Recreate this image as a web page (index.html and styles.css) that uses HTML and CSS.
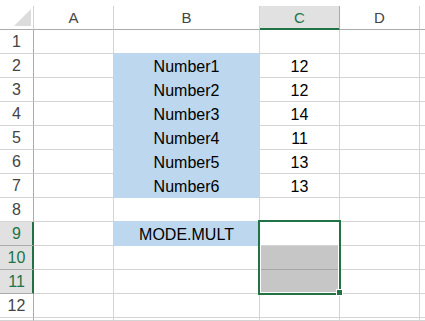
FILE: index.html
```html
<!DOCTYPE html>
<html lang="en">

<head>
  <meta charset="UTF-8" />
  <title>MODE.MULT</title>
  <link rel="stylesheet" href="styles.css">
</head>

<body>
  <div class="sheet">
    <div class="corner"><span class="tri"></span></div>
    <div class="colhead">A</div>
    <div class="colhead">B</div>
    <div class="colhead sel">C</div>
    <div class="colhead">D</div>
    <div class="colhead last"></div>

    <div class="rowhead">1</div><div class="cell"></div><div class="cell"></div><div class="cell"></div><div class="cell"></div><div class="cell last"></div>
    <div class="rowhead">2</div><div class="cell"></div><div class="cell fill">Number1</div><div class="cell">12</div><div class="cell"></div><div class="cell last"></div>
    <div class="rowhead">3</div><div class="cell"></div><div class="cell fill">Number2</div><div class="cell">12</div><div class="cell"></div><div class="cell last"></div>
    <div class="rowhead">4</div><div class="cell"></div><div class="cell fill">Number3</div><div class="cell">14</div><div class="cell"></div><div class="cell last"></div>
    <div class="rowhead">5</div><div class="cell"></div><div class="cell fill">Number4</div><div class="cell">11</div><div class="cell"></div><div class="cell last"></div>
    <div class="rowhead">6</div><div class="cell"></div><div class="cell fill">Number5</div><div class="cell">13</div><div class="cell"></div><div class="cell last"></div>
    <div class="rowhead">7</div><div class="cell"></div><div class="cell fill">Number6</div><div class="cell">13</div><div class="cell"></div><div class="cell last"></div>
    <div class="rowhead">8</div><div class="cell"></div><div class="cell"></div><div class="cell"></div><div class="cell"></div><div class="cell last"></div>
    <div class="rowhead sel">9</div><div class="cell"></div><div class="cell fill">MODE.MULT</div>
    <div class="cell active"><div class="selection"><span class="handle"></span></div></div>
    <div class="cell"></div><div class="cell last"></div>
    <div class="rowhead sel">10</div><div class="cell"></div><div class="cell"></div><div class="cell shade"></div><div class="cell"></div><div class="cell last"></div>
    <div class="rowhead sel">11</div><div class="cell"></div><div class="cell"></div><div class="cell shade"></div><div class="cell"></div><div class="cell last"></div>
    <div class="rowhead">12</div><div class="cell"></div><div class="cell"></div><div class="cell"></div><div class="cell"></div><div class="cell last"></div>
    <div class="rowhead"></div><div class="cell"></div><div class="cell"></div><div class="cell"></div><div class="cell"></div><div class="cell last"></div>
  </div>
</body>

</html>
```

FILE: styles.css
```css
* {
  margin: 0;
  padding: 0;
  box-sizing: border-box;
}

body {
  background: #fff;
  padding-top: 6px;
  overflow: hidden;
  height: 321px;
  font-family: 'Liberation Sans', Arial, sans-serif;
}

.sheet {
  display: grid;
  grid-template-columns: 34px 80px 146px 80px 80px 1fr;
  grid-template-rows: repeat(13, 24px) 3px;
  width: 425px;
}

.corner {
  position: relative;
  border-right: 1px solid #d4d4d4;
  border-bottom: 1px solid #ababab;
}

.corner .tri {
  position: absolute;
  right: 2px;
  bottom: 3px;
  width: 0;
  height: 0;
  border-left: 17px solid transparent;
  border-bottom: 17px solid #dcdcdc;
}

.colhead {
  display: flex;
  justify-content: center;
  align-items: center;
  font-size: 15px;
  color: #444;
  border-right: 1px solid #d4d4d4;
  border-bottom: 1px solid #ababab;
}

.colhead.sel {
  background: #e1e1e1;
  color: #217346;
  border-right-color: #ababab;
  border-bottom-color: #217346;
  box-shadow: inset 0 -1px 0 #217346;
}

.rowhead {
  display: flex;
  justify-content: center;
  align-items: center;
  padding-top: 1px;
  font-size: 16px;
  color: #444;
  border-right: 1px solid #ababab;
  border-bottom: 1px solid #d4d4d4;
}

.rowhead.sel {
  background: #e1e1e1;
  color: #217346;
  border-right-color: #217346;
  border-bottom-color: #ababab;
  box-shadow: inset -1px 0 0 #217346;
}

.cell {
  display: flex;
  justify-content: center;
  align-items: center;
  padding-top: 2px;
  font-size: 16px;
  color: #000;
  border-right: 1px solid #d4d4d4;
  border-bottom: 1px solid #d4d4d4;
}

.last {
  border-right: none;
}

.cell.fill {
  background: #bdd7ee;
  border-color: #bdd7ee;
  box-shadow: -1px -1px 0 #bdd7ee;
}

.cell.shade {
  background: #c6c6c6;
  border-bottom-color: #a6a6a6;
}

.cell.active {
  position: relative;
  z-index: 2;
}

.selection {
  position: absolute;
  left: -2px;
  top: -2px;
  width: 83px;
  height: 75px;
  border: 2px solid #217346;
  box-shadow: inset 0 0 0 1px #fff;
}

.handle {
  position: absolute;
  right: -4px;
  bottom: -3px;
  width: 7px;
  height: 7px;
  background: #217346;
  border: 1px solid #fff;
}
```
